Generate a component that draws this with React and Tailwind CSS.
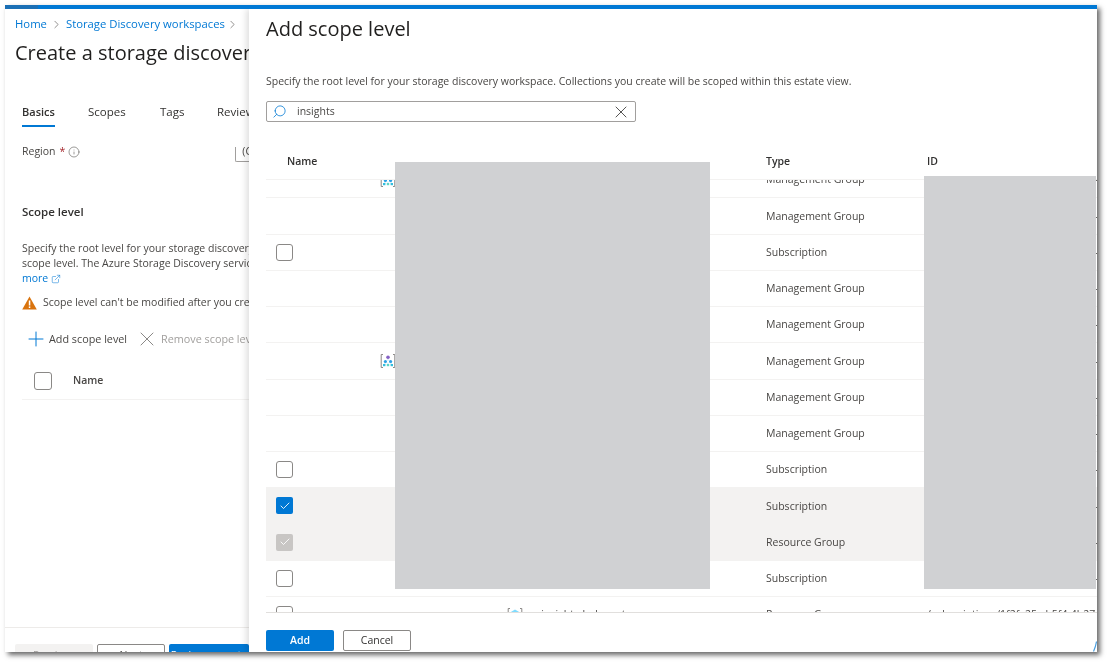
import { ChevronRight, Info, Plus, X, Search, ExternalLink, Check } from 'lucide-react';

const rows = [
  { type: 'Management Group', icon: 'group', iconClass: 'ml-[87px]' },
  { type: 'Management Group' },
  { type: 'Subscription', box: 'empty' },
  { type: 'Management Group' },
  { type: 'Management Group' },
  { type: 'Management Group', icon: 'group', iconClass: 'ml-[87px]' },
  { type: 'Management Group' },
  { type: 'Management Group' },
  { type: 'Subscription', box: 'empty' },
  { type: 'Subscription', box: 'checked', selected: true },
  { type: 'Resource Group', box: 'disabled', selected: true },
  { type: 'Subscription', box: 'empty' },
  { type: 'Resource Group', box: 'empty', icon: 'cube', iconClass: 'ml-[214px]', name: 'rg-insights-hub-eastus' },
];

function BracketIcon({ kind, className }) {
  return (
    <svg width="16" height="16" viewBox="0 0 16 16" fill="none" className={className}>
      <path d="M3 1.5H1.2v13H3M13 1.5h1.8v13H13" stroke="#8a8886" strokeWidth="1" />
      {kind === 'group' ? (
        <>
          <path d="M8 5v3M5 9.5v2M11 9.5v2M8 9.5v2" stroke="#9fd8ee" strokeWidth="0.6" />
          <circle cx="8" cy="4.2" r="1.8" fill="#8661c5" />
          <circle cx="5.4" cy="8.5" r="1.6" fill="#2aa0e6" />
          <circle cx="10.6" cy="8.5" r="1.6" fill="#2aa0e6" />
          <rect x="3" y="11" width="2.4" height="2.2" fill="#32bedd" />
          <rect x="6.8" y="11" width="2.4" height="2.2" fill="#5fd3c4" />
          <rect x="10.6" y="11" width="2.4" height="2.2" fill="#32bedd" />
        </>
      ) : (
        <path d="M8 2.5l5 3v5l-5 3-5-3v-5z" fill="#7fdcff" />
      )}
    </svg>
  );
}

function Box({ state, size = 'w-[17px] h-[17px]' }) {
  if (state === 'checked') {
    return (
      <span className="flex w-[17px] h-[17px] items-center justify-center rounded-[2px] bg-[#0078d4]">
        <Check size={12} strokeWidth={1.75} className="text-white" />
      </span>
    );
  }
  if (state === 'disabled') {
    return (
      <span className="flex w-[17px] h-[17px] items-center justify-center rounded-[2px] bg-[#c8c6c4]">
        <Check size={12} strokeWidth={1.75} className="text-white" />
      </span>
    );
  }
  return <span className={`block ${size} rounded-[3px] border border-[#8a8886] bg-white`} />;
}

function Row({ row }) {
  return (
    <div className={`flex h-[36.25px] shrink-0 items-center border-b border-[#f3f2f1] ${row.selected ? 'bg-[#f3f2f1]' : ''}`}>
      <div className="flex w-[500px] shrink-0 items-center pl-[10px]">
        <div className="w-[17px] shrink-0">{row.box && <Box state={row.box} />}</div>
        {row.icon && <BracketIcon kind={row.icon} className={`shrink-0 ${row.iconClass}`} />}
        {row.name && <span className="ml-[5px] truncate">{row.name}</span>}
      </div>
      <div className="w-[161px] shrink-0 whitespace-nowrap pt-[1px]">{row.type}</div>
      <div className="min-w-0 flex-1 overflow-hidden whitespace-nowrap pt-[1px]">/subscriptions/1f2fa25c-b5f4-4b27-9d1c-resourceGroups</div>
    </div>
  );
}

function LeftBlade() {
  return (
    <div className="flex w-[244px] shrink-0 flex-col overflow-hidden">
      <div className="min-h-0 flex-1 overflow-hidden pl-[10px] whitespace-nowrap">
        <div className="mt-[7px] flex h-[16px] items-center text-[11.3px] text-[#0078d4]">
          <span>Home</span>
          <ChevronRight size={13} strokeWidth={1.25} className="mx-[3px] shrink-0 text-[#605e5c]" />
          <span>Storage Discovery workspaces</span>
          <ChevronRight size={13} strokeWidth={1.25} className="ml-[1px] shrink-0 text-[#605e5c]" />
        </div>
        <h1 className="mt-[7px] h-[28px] text-[20px] leading-[28px] text-[#201f1e]">Create a storage discovery workspace</h1>
        <div className="ml-[7px] mt-[36px] flex h-[24px] text-[11.5px] text-[#323130]">
          <div className="h-[24px] w-[33px] shrink-0 border-b-2 border-[#0078d4] text-[11px] font-semibold leading-[18px]">Basics</div>
          <div className="ml-[33px] w-[38px] shrink-0 leading-[18px]">Scopes</div>
          <div className="ml-[34px] w-[23px] shrink-0 leading-[18px]">Tags</div>
          <div className="ml-[34px] w-[32px] shrink-0 overflow-hidden leading-[18px]">Review + create</div>
        </div>
        <div className="ml-[7px] mt-[14px] flex h-[22px] items-center">
          <span>Region</span>
          <span className="ml-[4px] text-[#a4262c]">*</span>
          <Info size={12} strokeWidth={1.25} className="ml-[3px] shrink-0 text-[#605e5c]" />
          <div className="mb-[1px] ml-[155px] h-[15px] w-[60px] shrink-0 self-end overflow-hidden rounded-bl-[2px] border-b border-l border-[#a19f9d] pl-[6px] leading-[9px]">(Canada)</div>
        </div>
        <div className="ml-[7px] mt-[40px] text-[11.5px] font-semibold leading-[18px] text-[#323130]">Scope level</div>
        <p className="ml-[7px] mt-[20px] leading-[15px]">
          Specify the root level for your storage discovery workspace<br />
          scope level. The Azure Storage Discovery service will<br />
          <span className="inline-flex items-center gap-[3px] text-[#0078d4]">more <ExternalLink size={10} strokeWidth={1.25} /></span>
        </p>
        <div className="ml-[7px] mt-[9px] flex h-[16px] items-center">
          <svg width="15" height="14" viewBox="0 0 15 14" className="shrink-0">
            <path d="M7.5 0.5L14.8 13.5H0.2z" fill="#d9730d" />
            <rect x="6.8" y="4.5" width="1.5" height="5" fill="#fff" />
            <rect x="6.8" y="10.4" width="1.5" height="1.6" fill="#fff" />
          </svg>
          <span className="ml-[6px]">Scope level can't be modified after you create the workspace</span>
        </div>
        <div className="ml-[9px] mt-[20px] flex h-[16px] items-center text-[10.8px]">
          <Plus size={24} strokeWidth={1} className="shrink-0 text-[#0078d4]" />
          <span className="ml-[1px]">Add scope level</span>
          <X size={24} strokeWidth={1} className="ml-[8px] shrink-0 text-[#8a8886]" />
          <span className="ml-[2px] text-[#a19f9d]">Remove scope level</span>
        </div>
        <div className="ml-[7px] mt-[14px] flex h-[39px] items-center border-b border-[#f3f2f1] pt-[1px]">
          <span className="ml-[12px]"><Box size="w-[18px] h-[18px]" /></span>
          <span className="ml-[21px] font-semibold">Name</span>
        </div>
      </div>
      <div className="flex h-[25px] shrink-0 gap-[4px] overflow-hidden border-t border-[#edebe9] pl-[10px] pt-[16px]">
        <div className="h-[24px] w-[78px] shrink-0 rounded-[2px] bg-[#f3f2f1] text-center leading-[22px] text-[#a19f9d]">Previous</div>
        <div className="h-[24px] w-[68px] shrink-0 rounded-[2px] border border-[#8a8886] text-center leading-[20px]">Next</div>
        <div className="h-[24px] w-[80px] shrink-0 rounded-[2px] bg-[#0078d4] text-center leading-[22px] text-white">Review + create</div>
      </div>
    </div>
  );
}

function RightPanel() {
  return (
    <div className="z-10 flex min-w-0 flex-1 flex-col overflow-hidden bg-white pl-[17px] shadow-[-3px_0_6px_rgba(0,0,0,0.12)]">
      <h2 className="h-[40px] text-[20px] leading-[40px] text-[#201f1e]">Add scope level</h2>
      <p className="mt-[24px] h-[16px] whitespace-nowrap leading-[16px]">
        Specify the root level for your storage discovery workspace. Collections you create will be scoped within this estate view.
      </p>
      <div className="mt-[12px] flex h-[21px] w-[370px] shrink-0 items-center rounded-[2px] border border-[#a19f9d] pl-[5px] pr-[4px]">
        <Search size={15} strokeWidth={1.25} className="shrink-0 -scale-x-100 text-[#0078d4]" />
        <span className="ml-[10px] flex-1">insights</span>
        <X size={20} strokeWidth={1} className="shrink-0 text-[#323130]" />
      </div>
      <div className="relative mt-[28px] flex min-h-0 flex-col">
        <div className="flex h-[30px] shrink-0 items-center border-b border-[#f3f2f1] pb-[6px] font-semibold text-[#323130]">
          <div className="w-[500px] shrink-0 pl-[21px]">Name</div>
          <div className="w-[161px] shrink-0">Type</div>
          <div>ID</div>
        </div>
        <div className="h-[432px] overflow-hidden">
          <div className="-mt-[18px]">
            {rows.map((row, i) => <Row key={i} row={row} />)}
          </div>
        </div>
        {/* redacted blocks in the source screenshot */}
        <div className="absolute left-[129px] top-[12px] h-[427px] w-[315px] bg-[#d0d1d3]" />
        <div className="absolute left-[658px] top-[26px] h-[413px] w-[172px] bg-[#d0d1d3]" />
      </div>
      <div className="flex flex-1 gap-[9px] border-t border-[#e1dfdd] pt-[17px]">
        <div className="h-[21px] w-[68px] rounded-[2px] bg-[#0078d4] text-center font-semibold leading-[21px] text-white">Add</div>
        <div className="h-[21px] w-[68px] rounded-[2px] border border-[#8a8886] text-center leading-[19px] text-[#323130]">Cancel</div>
      </div>
    </div>
  );
}

export default function App() {
  return (
    <div className="h-[667px] w-[1112px] overflow-hidden bg-white pl-[5px] pt-[5px] font-['Open_Sans',sans-serif] text-[10.5px] text-[#484644]">
      <div className="relative flex h-[647px] w-[1092px] flex-col bg-white shadow-[3px_3px_5px_rgba(0,0,0,0.6)] blur-[0.35px]">
        <div className="h-[4px] shrink-0 bg-[#0078d4]">
          <div className="h-full w-[33px] bg-[#1a6fb5]" />
        </div>
        <div className="flex min-h-0 flex-1 overflow-hidden">
          <LeftBlade />
          <RightPanel />
        </div>
        {/* sliver of a floating button, cut off by the screenshot edge */}
        <svg width="4" height="11" viewBox="0 0 4 11" fill="none" className="absolute bottom-0 right-0 z-20">
          <path d="M3.5 0.5C3 4 2 7 0.5 10.5" stroke="#4a9fe0" strokeWidth="1.2" />
        </svg>
      </div>
    </div>
  );
}
